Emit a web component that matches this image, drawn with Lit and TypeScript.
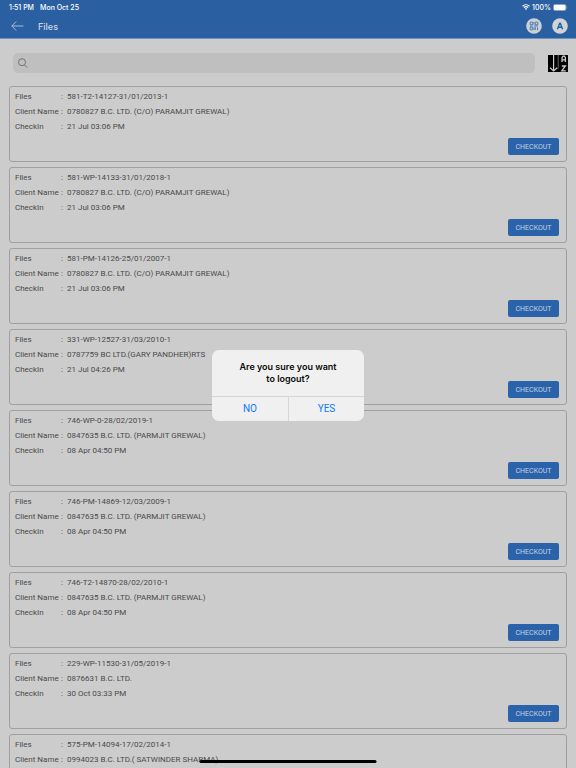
import { LitElement, html, css } from "lit";
import { customElement, state } from "lit/decorators.js";

interface FileRow {
  file: string;
  client: string;
  checkIn?: string;
}

const FILES: FileRow[] = [
  { file: "581-T2-14127-31/01/2013-1", client: "0780827 B.C. LTD. (C/O) PARAMJIT GREWAL)", checkIn: "21 Jul 03:06 PM" },
  { file: "581-WP-14133-31/01/2018-1", client: "0780827 B.C. LTD. (C/O) PARAMJIT GREWAL)", checkIn: "21 Jul 03:06 PM" },
  { file: "581-PM-14126-25/01/2007-1", client: "0780827 B.C. LTD. (C/O) PARAMJIT GREWAL)", checkIn: "21 Jul 03:06 PM" },
  { file: "331-WP-12527-31/03/2010-1", client: "0787759 BC LTD.(GARY PANDHER)RTS", checkIn: "21 Jul 04:26 PM" },
  { file: "746-WP-0-28/02/2019-1", client: "0847635 B.C. LTD. (PARMJIT GREWAL)", checkIn: "08 Apr 04:50 PM" },
  { file: "746-PM-14869-12/03/2009-1", client: "0847635 B.C. LTD. (PARMJIT GREWAL)", checkIn: "08 Apr 04:50 PM" },
  { file: "746-T2-14870-28/02/2010-1", client: "0847635 B.C. LTD. (PARMJIT GREWAL)", checkIn: "08 Apr 04:50 PM" },
  { file: "229-WP-11530-31/05/2019-1", client: "0876631 B.C. LTD.", checkIn: "30 Oct 03:33 PM" },
  { file: "575-PM-14094-17/02/2014-1", client: "0994023 B.C. LTD.( SATWINDER SHARMA)" },
];

@customElement("app-root")
export class AppRoot extends LitElement {
  static styles = css`
    :host {
      display: flex;
      flex-direction: column;
      height: 100vh;
      overflow: hidden;
      position: relative;
      background: #cccccc;
      color: #4a4a4a;
      font-family: Roboto, "Liberation Sans", sans-serif;
      font-size: 8px;
    }
    * {
      box-sizing: border-box;
    }
    button {
      font: inherit;
      border: 0;
      padding: 0;
      margin: 0;
      background: none;
      color: inherit;
    }
    svg {
      display: block;
    }
    header,
    .alert h2 {
      font-family: Inter, "Liberation Sans", sans-serif;
    }
    header {
      flex: none;
      background: #2a5fa2;
      border-bottom: 1px solid #6f93c2;
    }
    .status {
      display: flex;
      align-items: center;
      height: 14px;
      padding: 0 8px 0 9px;
      gap: 6px;
      font-size: 7px;
      font-weight: 500;
      color: #ffffff;
    }
    .power {
      display: flex;
      align-items: center;
      gap: 2px;
      margin-left: auto;
    }
    .bar {
      display: flex;
      align-items: center;
      height: 24px;
      padding: 0 8px 0 11px;
    }
    h1 {
      margin: 0 auto 0 14px;
      font-size: 9px;
      font-weight: 500;
      color: #d0d8e3;
    }
    .round {
      margin-left: 10px;
    }
    .tools {
      flex: none;
      display: flex;
      align-items: center;
      gap: 13px;
      padding: 14px 8px 13px 13px;
    }
    .search {
      flex: 1;
      display: flex;
      align-items: center;
      height: 20px;
      padding: 0 5px;
      gap: 5px;
      border-radius: 5px;
      background: #bfbfbf;
    }
    .search input {
      flex: 1;
      min-width: 0;
      border: 0;
      outline: 0;
      padding: 0;
      background: none;
      font: inherit;
      color: inherit;
    }
    ul {
      flex: 1;
      min-height: 0;
      overflow: hidden;
      list-style: none;
      margin: 0;
      padding: 0 9px;
    }
    .card {
      display: flex;
      flex-direction: column;
      height: 76px;
      margin-bottom: 5px;
      padding: 2px 7px 6px 5px;
      border: 1px solid #a0a0a0;
      border-radius: 3px;
    }
    dl {
      display: grid;
      grid-auto-rows: 15px;
      line-height: 15px;
      margin: 0;
      white-space: nowrap;
    }
    .field {
      display: grid;
      grid-template-columns: 46px 1fr;
    }
    dd {
      margin: 0;
    }
    dd::before {
      content: ":";
      display: inline-block;
      width: 6px;
    }
    .checkout {
      align-self: flex-end;
      margin-top: auto;
      width: 51px;
      height: 17px;
      border-radius: 2px;
      background: #2a63aa;
      color: #c6d2e2;
      font-size: 7px;
    }
    .overlay {
      position: absolute;
      inset: 0;
      display: grid;
      place-items: center;
      padding-top: 2px;
    }
    .alert {
      width: 152px;
      border-radius: 7px;
      overflow: hidden;
      background: #f0f0f0;
    }
    .alert h2 {
      margin: 0;
      padding: 11px 16px 11px;
      font-size: 9px;
      line-height: 12px;
      font-weight: 600;
      text-align: center;
      color: #0a0a0a;
    }
    .choices {
      display: grid;
      grid-template-columns: 1fr 1fr;
      border-top: 1px solid #d6d6d6;
    }
    .choices button {
      height: 24px;
      font-size: 10px;
      color: #0a7aff;
    }
    .choices button + button {
      border-left: 1px solid #d6d6d6;
    }
    .home {
      position: absolute;
      left: 50%;
      bottom: 5px;
      width: 177px;
      height: 3px;
      transform: translateX(-50%);
      border-radius: 2px;
      background: #000000;
    }
  `;

  @state() private asking = true;

  private close() {
    this.asking = false;
  }

  private field(label: string, value: string) {
    return html`<div class="field"><dt>${label}</dt><dd>${value}</dd></div>`;
  }

  private card(row: FileRow) {
    return html`
      <li class="card">
        <dl>
          ${this.field("Files", row.file)} ${this.field("Client Name", row.client)}
          ${row.checkIn ? this.field("CheckIn", row.checkIn) : null}
        </dl>
        ${row.checkIn ? html`<button class="checkout">CHECKOUT</button>` : null}
      </li>
    `;
  }

  render() {
    return html`
      <header>
        <div class="status">
          <span>1:51 PM</span><span>Mon Oct 25</span>
          <div class="power">
            <svg width="8" height="6" viewBox="0 0 16 12" fill="none" stroke="#fff" stroke-width="2.2">
              <path d="M1 4.5C5 .6 11 .6 15 4.5M3.8 7.4c2.4-2.3 6-2.3 8.4 0" />
              <path d="M8 12 5.6 9.5c1.4-1.3 3.4-1.3 4.8 0z" fill="#fff" stroke="none" />
            </svg>
            <span>100%</span>
            <svg width="15" height="7" viewBox="0 0 15 7">
              <rect x=".3" y=".3" width="12.8" height="6.4" rx="2" fill="none" stroke="#9db6d6" stroke-width=".6" />
              <rect x=".8" y=".8" width="11.8" height="5.4" rx="1.4" fill="#fff" />
              <path d="M13.8 2.4q1 1.1 0 2.2z" fill="#9db6d6" />
            </svg>
          </div>
        </div>
        <div class="bar">
          <button aria-label="Back">
            <svg width="13" height="10" viewBox="0 0 13 10" fill="none" stroke="#b9c8dc" stroke-width=".9">
              <path d="M12.4 5H.8M5.2.5.8 5l4.4 4.5" />
            </svg>
          </button>
          <h1>Files</h1>
          <button class="round" aria-label="Scan code">
            <svg width="16" height="16" viewBox="0 0 16 16">
              <circle cx="8" cy="8" r="7.8" fill="#ccd0d6" />
              <g fill="none" stroke="#4f7db3" stroke-width="1">
                <path d="M4.2 4.2h2.6v2.6H4.2zM9.2 4.2h2.6v2.6H9.2zM4.2 9.2h2.6v2.6H4.2z" />
                <path d="M8 4v2.5M8 8h4M4 8h2.5M9.3 9v3M11.5 9.4v2.8M8 9.5V12" />
              </g>
            </svg>
          </button>
          <button class="round" aria-label="Account">
            <svg width="16" height="16" viewBox="0 0 16 16">
              <circle cx="8" cy="8" r="7.8" fill="#d0d3d8" />
              <path d="M5.4 11.3 7.7 5.2h.6l2.3 6.1M6.4 9.3h3.2" fill="none" stroke="#2a5fa2" stroke-width="1.4" />
            </svg>
          </button>
        </div>
      </header>

      <div class="tools">
        <label class="search">
          <svg width="10" height="10" viewBox="0 0 10 10" fill="none" stroke="#6c6c6c" stroke-width=".9">
            <circle cx="4" cy="4.2" r="3.5" />
            <path d="M6.5 6.8 9.2 9.6" />
          </svg>
          <input type="text" aria-label="Search files" />
        </label>
        <button aria-label="Sort A to Z">
          <svg width="20" height="17" viewBox="0 0 20 17">
            <path d="M0 0h20v17H0z" fill="#000" />
            <g fill="none" stroke="#ccc">
              <path d="M5.6 0v15.5M2 12.8l3.6 3.2 3.6-3.2" stroke-width="1.2" />
              <path d="M10.2 0v13.5" stroke-width=".5" />
              <path d="M14 7V2.6l1-1.4h1.4l1 1.4V7M14 4.8h3.4M13.8 11h3.6l-3.6 4.8h4" stroke-width="1.3" />
            </g>
          </svg>
        </button>
      </div>

      <ul>
        ${FILES.map((row) => this.card(row))}
      </ul>

      ${this.asking
        ? html`<div class="overlay">
            <div class="alert" role="alertdialog" aria-labelledby="question">
              <h2 id="question">Are you sure you want<br />to logout?</h2>
              <div class="choices">
                <button @click=${this.close}>NO</button>
                <button @click=${this.close}>YES</button>
              </div>
            </div>
          </div>`
        : null}
      <div class="home"></div>
    `;
  }
}
